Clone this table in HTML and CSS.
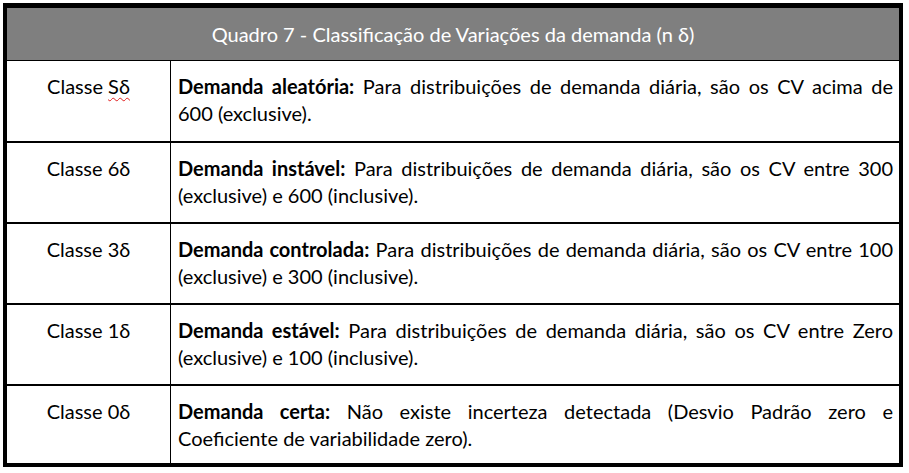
FILE: index.html
```html
<!DOCTYPE html>
<html lang="pt">
<head>
<meta charset="utf-8">
<title>Quadro 7</title>
<link rel="stylesheet" href="styles.css">
</head>
<body>
<div class="quadro">
  <div class="head">Quadro 7 - Classificação de Variações da demanda (n δ)</div>
  <div class="row r1">
    <div class="label">Classe <span class="spell">Sδ</span></div>
    <div class="desc"><span class="ln"><b>Demanda aleatória:</b> Para distribuições de demanda diária, são os CV acima de</span><span class="ln">600 (exclusive).</span></div>
  </div>
  <div class="row">
    <div class="label">Classe 6δ</div>
    <div class="desc"><span class="ln"><b>Demanda instável:</b> Para distribuições de demanda diária, são os CV entre 300</span><span class="ln">(exclusive) e 600 (inclusive).</span></div>
  </div>
  <div class="row">
    <div class="label">Classe 3δ</div>
    <div class="desc"><span class="ln"><b>Demanda controlada:</b> Para distribuições de demanda diária, são os CV entre 100</span><span class="ln">(exclusive) e 300 (inclusive).</span></div>
  </div>
  <div class="row">
    <div class="label">Classe 1δ</div>
    <div class="desc"><span class="ln"><b>Demanda estável:</b> Para distribuições de demanda diária, são os CV entre Zero</span><span class="ln">(exclusive) e 100 (inclusive).</span></div>
  </div>
  <div class="row last">
    <div class="label">Classe 0δ</div>
    <div class="desc"><span class="ln"><b>Demanda certa:</b> Não existe incerteza detectada (Desvio Padrão zero e</span><span class="ln">Coeficiente de variabilidade zero).</span></div>
  </div>
</div>
</body>
</html>
```

FILE: styles.css
```css
html, body {
  margin: 0;
  padding: 0;
  background: #ffffff;
}
body {
  padding: 3px;
  font-family: "Lato", "Liberation Sans", sans-serif;
  font-size: 20px;
  color: #000;
}
.quadro {
  width: 892px;
  border: 4px solid #000;
  border-top-width: 5px;
}
.head {
  height: 52px;
  background: #7f7f7f;
  color: #fff;
  display: flex;
  align-items: center;
  justify-content: center;
  border-bottom: 1px solid #000;
}
.row {
  display: grid;
  grid-template-columns: 164px 1fr;
  height: 79px;
  border-top: 2px solid #000;
}
.row.r1 {
  border-top: none;
  height: 80px;
}
.row.last {
  height: 77px;
}
.label {
  border-right: 1px solid #000;
  text-align: center;
  padding-top: 12px;
  line-height: 27px;
}
.desc {
  padding: 12px 6px 0 7px;
  line-height: 27px;
  text-align: justify;
}
.ln {
  display: block;
  white-space: nowrap;
}
.ln:first-child {
  white-space: normal;
  text-align: justify;
  text-align-last: justify;
}
.desc b {
  font-weight: 700;
}
.spell {
  text-decoration: underline wavy #e02020;
  text-decoration-thickness: 1px;
  text-underline-offset: 3px;
}
```
